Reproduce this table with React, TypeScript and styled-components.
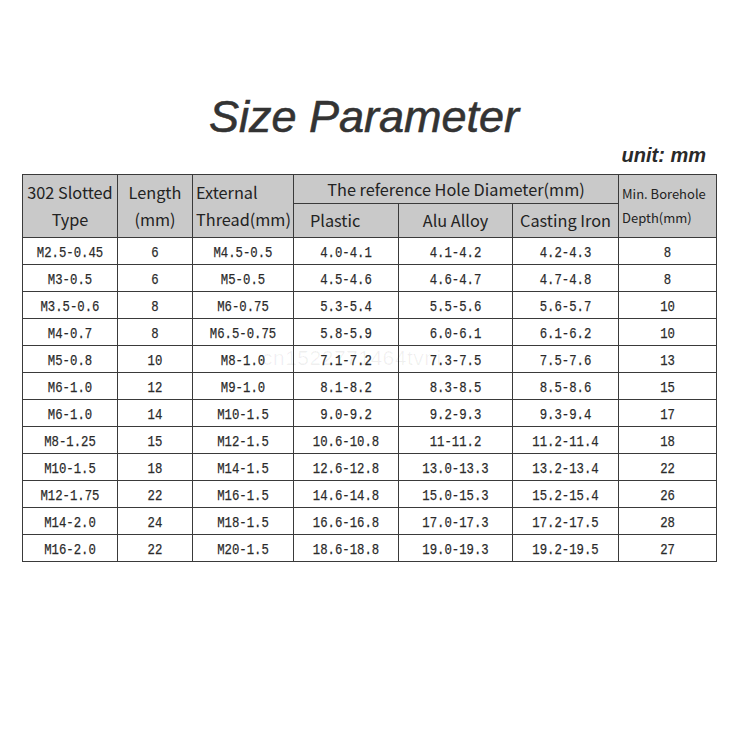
import React from 'react';
import styled, { createGlobalStyle } from 'styled-components';

type Row = [string, string, string, string, string, string, string];

const rows: Row[] = [
  ['M2.5-0.45', '6', 'M4.5-0.5', '4.0-4.1', '4.1-4.2', '4.2-4.3', '8'],
  ['M3-0.5', '6', 'M5-0.5', '4.5-4.6', '4.6-4.7', '4.7-4.8', '8'],
  ['M3.5-0.6', '8', 'M6-0.75', '5.3-5.4', '5.5-5.6', '5.6-5.7', '10'],
  ['M4-0.7', '8', 'M6.5-0.75', '5.8-5.9', '6.0-6.1', '6.1-6.2', '10'],
  ['M5-0.8', '10', 'M8-1.0', '7.1-7.2', '7.3-7.5', '7.5-7.6', '13'],
  ['M6-1.0', '12', 'M9-1.0', '8.1-8.2', '8.3-8.5', '8.5-8.6', '15'],
  ['M6-1.0', '14', 'M10-1.5', '9.0-9.2', '9.2-9.3', '9.3-9.4', '17'],
  ['M8-1.25', '15', 'M12-1.5', '10.6-10.8', '11-11.2', '11.2-11.4', '18'],
  ['M10-1.5', '18', 'M14-1.5', '12.6-12.8', '13.0-13.3', '13.2-13.4', '22'],
  ['M12-1.75', '22', 'M16-1.5', '14.6-14.8', '15.0-15.3', '15.2-15.4', '26'],
  ['M14-2.0', '24', 'M18-1.5', '16.6-16.8', '17.0-17.3', '17.2-17.5', '28'],
  ['M16-2.0', '22', 'M20-1.5', '18.6-18.8', '19.0-19.3', '19.2-19.5', '27'],
];

const colWidths = [95, 75, 101, 105, 114, 106, 98];

const GlobalStyle = createGlobalStyle`
  html, body {
    margin: 0;
    padding: 0;
    background: #ffffff;
  }
`;

const Page = styled.div`
  width: 734px;
  height: 734px;
  box-sizing: border-box;
  padding: 94px 18px 0 22px;
  display: flex;
  flex-direction: column;
`;

const Title = styled.h1`
  margin: 0;
  text-align: center;
  font-family: 'Liberation Sans', Arial, sans-serif;
  font-style: italic;
  font-weight: normal;
  font-size: 45px;
  line-height: 46px;
  color: #333333;
  -webkit-text-stroke: 0.6px #333333;
  padding-right: 10px;
`;

const Unit = styled.div`
  align-self: flex-end;
  margin: 4px 10px 8px 0;
  font-family: 'Liberation Sans', Arial, sans-serif;
  font-style: italic;
  font-weight: bold;
  font-size: 20px;
  line-height: 22px;
  color: #2a2a2a;
`;

const TableWrap = styled.div`
  position: relative;
  width: 694px;
`;

// faint watermark lying over the table
const Watermark = styled.div`
  position: absolute;
  left: 240px;
  top: 172px;
  font-family: 'Liberation Sans', Arial, sans-serif;
  font-size: 21px;
  letter-spacing: 0.5px;
  color: rgba(0, 0, 0, 0.06);
  pointer-events: none;
`;

const Table = styled.table`
  width: 694px;
  border-collapse: collapse;
  table-layout: fixed;
  border: 1.5px solid #3a3a3a;
`;

const HeadCell = styled.th<{ $align?: 'left' | 'center'; $small?: boolean; $h?: number }>`
  background: #c9c9c9;
  border: 1px solid #3a3a3a;
  padding: 0 3px;
  height: ${(p) => (p.$h ? `${p.$h}px` : 'auto')};
  text-align: ${(p) => p.$align || 'center'};
  font-family: 'Noto Sans CJK SC', 'Noto Sans', sans-serif;
  font-weight: normal;
  font-size: ${(p) => (p.$small ? '13px' : '16.3px')};
  line-height: ${(p) => (p.$small ? '24px' : '27px')};
  color: #222222;
  white-space: nowrap;
  overflow: hidden;
`;

const Cell = styled.td`
  height: 26px;
  padding: 0;
  border: 1px solid #3a3a3a;
  text-align: center;
  color: #2a2a2a;
  white-space: nowrap;
`;

const Value = styled.span`
  display: inline-block;
  font-family: 'Liberation Mono', 'DejaVu Sans Mono', monospace;
  font-size: 12.3px;
  line-height: 14px;
  transform: scaleY(1.25);
  -webkit-text-stroke: 0.2px #2a2a2a;
`;

const App: React.FC = () => {
  return (
    <>
      <GlobalStyle />
      <Page>
        <Title>Size Parameter</Title>
        <Unit>unit: mm</Unit>
        <TableWrap>
          <Table>
            <colgroup>
              {colWidths.map((w, i) => (
                <col key={i} style={{ width: w }} />
              ))}
            </colgroup>
            <thead>
              <tr>
                <HeadCell rowSpan={2}>
                  302 Slotted
                  <br />
                  Type
                </HeadCell>
                <HeadCell rowSpan={2}>
                  Length
                  <br />
                  (mm)
                </HeadCell>
                <HeadCell rowSpan={2} $align="left">
                  External
                  <br />
                  Thread(mm)
                </HeadCell>
                <HeadCell colSpan={3} $h={28}>
                  The reference Hole Diameter(mm)
                </HeadCell>
                <HeadCell rowSpan={2} $align="left" $small>
                  Min. Borehole
                  <br />
                  Depth(mm)
                </HeadCell>
              </tr>
              <tr>
                <HeadCell $h={33} $align="left" style={{ paddingLeft: 16 }}>
                  Plastic
                </HeadCell>
                <HeadCell $h={33}>Alu Alloy</HeadCell>
                <HeadCell $h={33}>Casting Iron</HeadCell>
              </tr>
            </thead>
            <tbody>
              {rows.map((r, i) => (
                <tr key={i}>
                  {r.map((v, j) => (
                    <Cell key={j}>
                      <Value>{v}</Value>
                    </Cell>
                  ))}
                </tr>
              ))}
            </tbody>
          </Table>
          <Watermark>cn1522771464tvni</Watermark>
        </TableWrap>
      </Page>
    </>
  );
};

export default App;
